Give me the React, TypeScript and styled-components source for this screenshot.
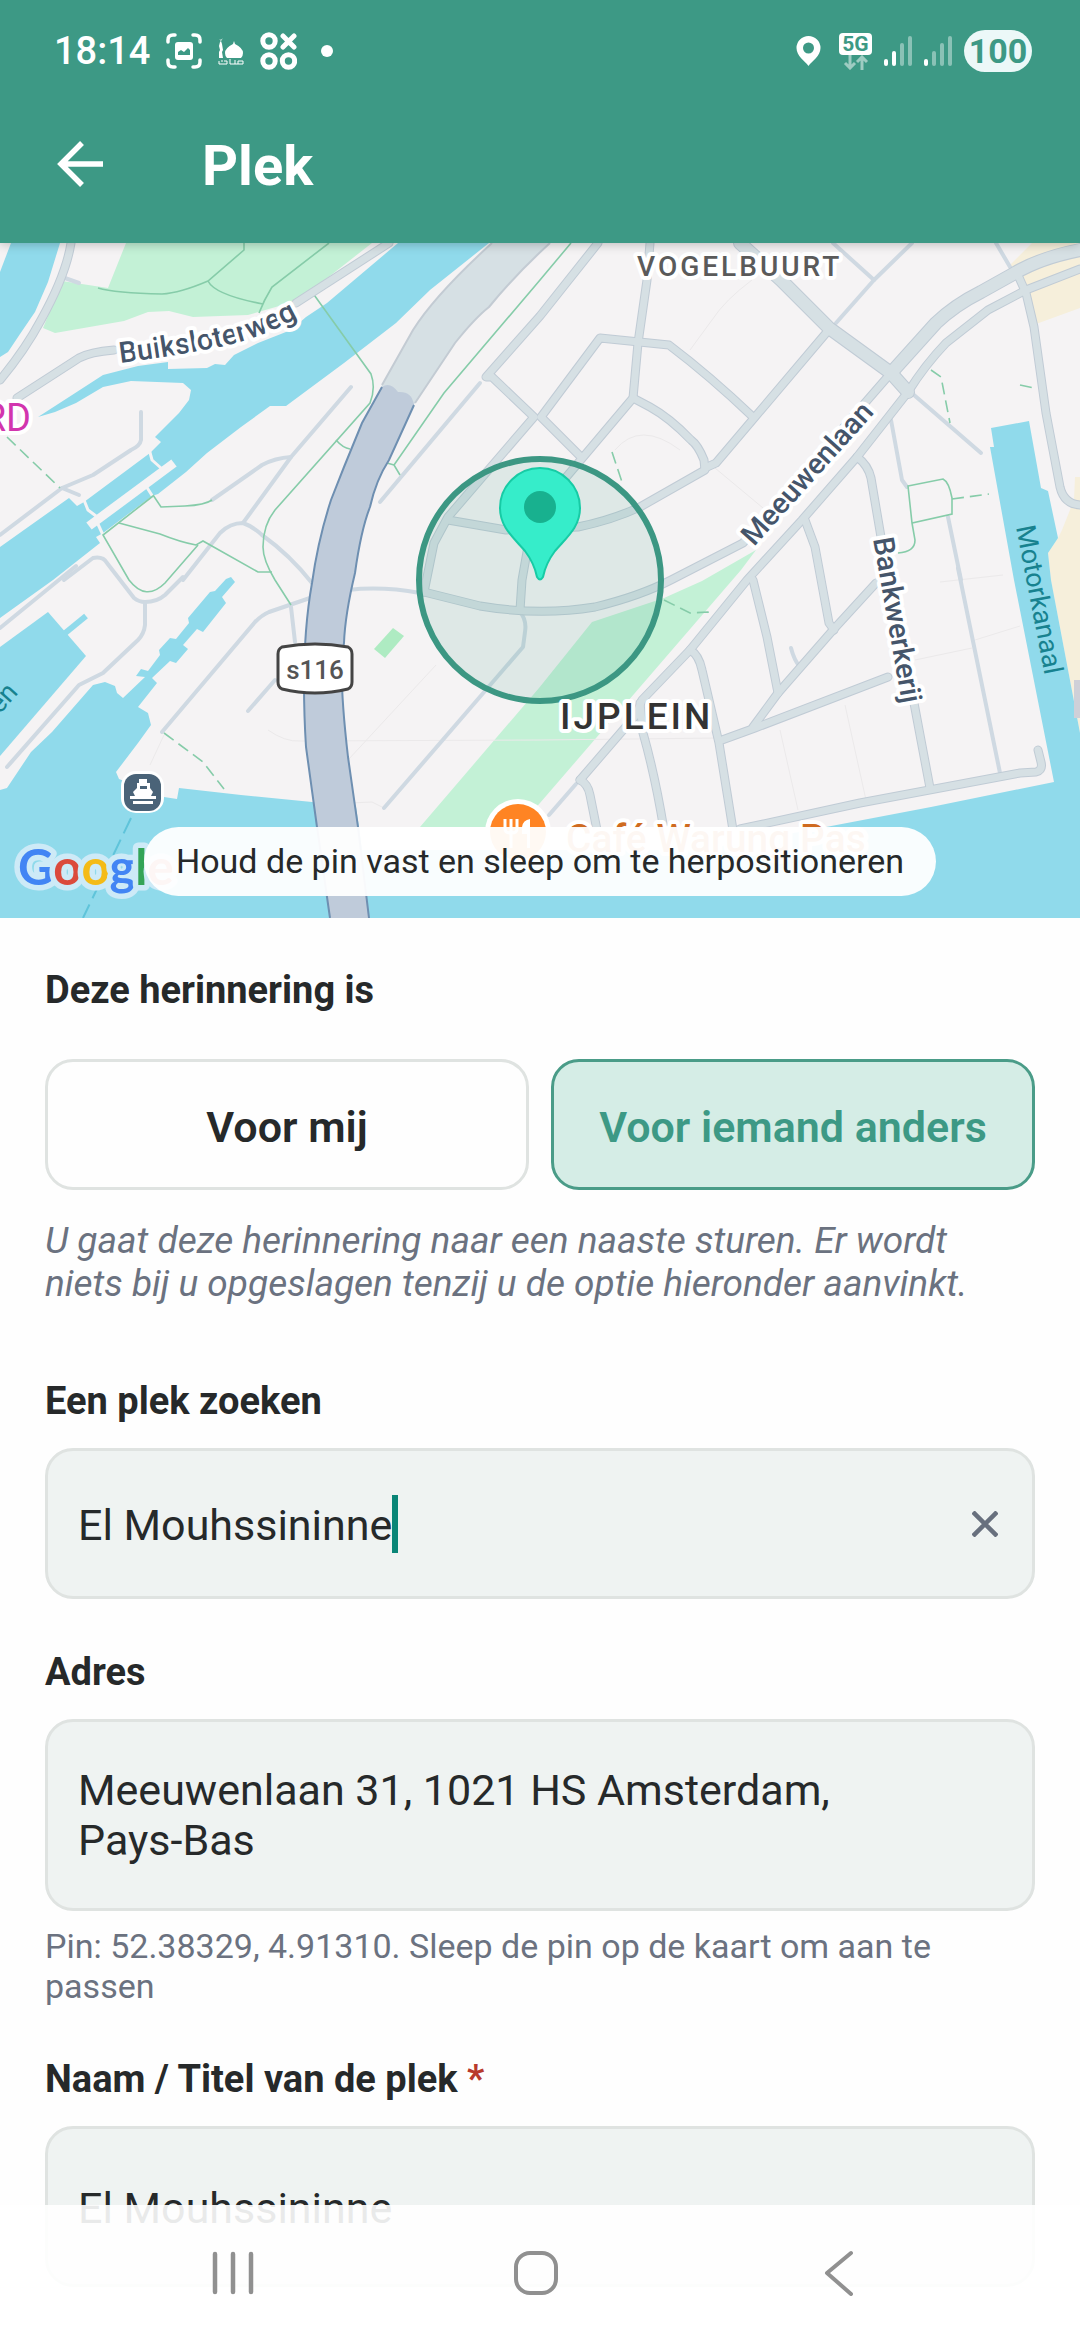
import { useState } from "react";
import styled, { createGlobalStyle } from "styled-components";

const water = [
  "11,243 60,243 48,282 35,312 20,334 8,352 0,357 0,272",
  "398,243 327,303 306,317 291,330 258,343 234,355 225,365 215,364 207,368 168,369 168,362 138,366 103,375 69,397 38,417 55,412 76,403 103,387 131,381 183,383 191,390 189,400 179,413 155,437 161,442 150,453 84,502 77,506 69,498 0,547 0,618 53,580 100,543 96,537 103,533 152,496 158,494 186,472 207,453 241,427 270,406 286,406 344,363 396,323 430,290 489,243",
  "48,612 86,656 0,756 0,647",
  "0,790 7,788 31,752 52,732 93,685 105,682 115,686 117,693 123,698 145,677 136,676 141,669 148,671 160,655 159,650 170,638 176,639 189,623 188,618 210,592 215,591 226,579 231,577 235,582 222,597 226,603 203,632 197,629 183,645 188,649 176,663 170,661 152,678 157,683 138,707 148,713 151,725 138,743 116,772 119,779 164,797 177,799 179,788 241,795 312,802 356,807 359,827 362,850 700,850 826,827 931,807 1054,782 1014,580 990,447 994,447 991,428 1029,421 1041,488 1048,491 1058,538 1048,553 1051,580 1080,733 1080,918 0,918",
];

const parks = [
  "126,243 108,288 62,281 43,328 55,333 124,321 148,312 169,311 193,317 248,315 300,300 312,290 372,243",
  "756,550 741,570 540,803 518,827 420,827 539,688 592,622 664,598 702,581",
];

const sand = [
  "1008,267 1032,243 1080,243 1080,308 1036,324 1029,297",
  "1080,477 1075,477 1074,500 1070,510 1062,530 1058,538 1048,553 1051,580 1080,733",
];

const wideRoads = [
  "M740 243L781 280L829 328L891 373L908 392",
  "M1080 250Q1040 258 1015 273L981 292Q955 305 936 323L891 373",
];

const roads = [
  "M891 373L743 543L671 580Q640 596 595 607Q540 616 480 606L424 592",
  "M1080 269L1026 290L988 310L946 343Q925 365 908 392L857 457L802 520L747 580L690 650L642 700L636 715L580 780",
  "M1017 273L1026 293L1034 327L1046 413L1060 487Q1064 504 1080 505",
  "M650 243L647 280L638 343L633 398L568 475L530 520",
  "M598 243L540 316L486 377L492 377L534 417L448 517L434 543L424 592",
  "M581 457L541 417L600 338L669 345Q710 376 753 417",
  "M448 520L506 530L578 527Q612 520 640 507L705 470L704 460Q698 445 691 440Q670 418 650 407L633 398",
  "M827 332L755 417L716 463L705 468",
  "M530 535L522 580L520 610",
  "M805 520L815 547L829 623L834 630",
  "M753 580L767 637L778 693",
  "M876 583L833 630L778 693L753 727",
  "M722 740L755 728L888 677",
  "M690 650Q699 655 702 670L719 743L733 830",
  "M640 703L643 733Q655 775 664 830",
  "M580 780Q588 784 590 795L597 830",
  "M740 829L860 803L1020 773L1036 772Q1043 770 1041 762L1038 750",
  "M857 457Q868 465 871 478L881 537L914 703L930 788",
  "M71 243Q66 275 41 320Q25 350 0 380",
  "M17 398L79 358Q90 352 114 350",
  "M296 303L389 243",
];

const lanes = [
  "M62 277L79 283",
  "M141 412V440Q140 446 131 450L93 475L62 488L0 535",
  "M62 488L79 495",
  "M351 387L291 457L243 523",
  "M291 457Q275 458 262 465L212 500",
  "M183 580L220 533Q230 523 243 523Q252 526 262 535Q290 555 312 583",
  "M64 580L93 558Q103 556 107 563L134 598Q139 602 145 602Q157 602 165 595L183 577",
  "M145 602V625Q144 634 138 640L103 673L79 685L7 767",
  "M76 566L0 628",
  "M310 598L269 612Q262 615 255 622L162 732",
  "M291 607L295 642",
  "M275 680L248 711",
  "M348 590Q382 586 420 593",
  "M480 383L380 502",
  "M520 612Q527 620 525 632L523 647L384 808",
  "M958 568L1000 773",
  "M948 517L961 580",
  "M914 395L981 453",
  "M891 420L902 480L907 487",
  "M833 243L874 280L836 323",
  "M912 243L874 280",
  "M996 243L1013 272",
  "M791 648Q794 660 800 667",
  "M576 784L549 815",
];

const footpaths = [
  "M98 288Q115 293 162 294Q180 293 208 281L244 250V243",
  "M208 281Q215 295 263 304",
  "M329 243L272 287Q264 300 259 313",
  "M312 292L371 374Q376 388 370 403L275 510Q263 525 263 547Q263 560 275 580L291 605",
  "M336 440Q343 448 350 449",
  "M571 243L540 280L444 393L394 465L400 475M387 463L394 465",
  "M153 495L161 507L185 506Q205 505 212 500",
  "M119 523L160 534Q180 542 196 545L203 541L258 572H272",
  "M153 496L103 535L129 580Q146 602 165 583L198 545",
  "M908 486L943 479Q949 482 952 498V514L912 523ZM912 523L915 540Q915 552 898 553",
];

const dashedPaths = [
  "M7 437L60 488",
  "M164 733L203 762L224 789",
  "M952 499L989 494",
  "M931 370L941 377L950 423",
  "M612 452L622 482",
  "M1020 385L1034 388",
  "M664 600L690 613L708 612L713 618",
];

const faintPaths = [
  "M268 730Q285 742 300 741L540 740L720 738",
  "M752 280Q725 300 712 320L690 350",
  "M615 450Q640 420 680 450",
  "M715 468L763 508",
  "M436 665L348 760",
  "M780 730L798 810M845 705L866 800",
  "M915 660L972 648M940 582L1003 575M975 640L1020 626",
  "M164 735L150 765M350 803L372 802L384 808",
];

const MapDrawing = () => (
  <MapSvg
    viewBox="0 243 1080 675"
    preserveAspectRatio="xMidYMid slice"
    role="img"
    aria-label="Kaart"
  >
    <rect y="243" width="1080" height="675" fill="#f5f3f4" />
    {sand.map((points) => (
      <polygon key={points} points={points} fill="#f6efdb" />
    ))}
    {parks.map((points) => (
      <polygon key={points} points={points} fill="#c3f1d6" />
    ))}
    <polygon points="393,628 404,636 385,658 374,649" fill="#aeebc2" />
    {water.map((points) => (
      <polygon key={points} points={points} fill="#90daeb" />
    ))}
    <path d="M64 634L86 616" stroke="#90daeb" strokeWidth="6" />
    <rect x="1074" y="680" width="6" height="38" fill="#cfd0d8" />

    {/* jetty and lock gates */}
    <g stroke="#f5f3f4" fill="none">
      <path d="M174 463L89 526" strokeWidth="9" />
      <path
        d="M148 445L152 460L161 468M84 500L88 510L96 516M146 486L153 497M97 522L103 535"
        strokeWidth="3"
      />
    </g>

    <g fill="none" stroke="#ebe9ea" strokeWidth="1">
      {faintPaths.map((d) => (
        <path key={d} d={d} />
      ))}
    </g>
    <g fill="none" stroke="#cfd9e2" strokeWidth="4" strokeLinecap="round" strokeLinejoin="round">
      {lanes.map((d) => (
        <path key={d} d={d} />
      ))}
    </g>
    <g fill="none" stroke="#86cca9" strokeWidth="1.6">
      {footpaths.map((d) => (
        <path key={d} d={d} />
      ))}
      <g strokeDasharray="12 6">
        {dashedPaths.map((d) => (
          <path key={d} d={d} />
        ))}
      </g>
    </g>
    <g fill="none" stroke="#c0cbd5" strokeLinecap="round" strokeLinejoin="round">
      {roads.map((d) => (
        <path key={d} d={d} strokeWidth="9" />
      ))}
      {wideRoads.map((d) => (
        <path key={d} d={d} strokeWidth="14" />
      ))}
    </g>
    <g fill="none" stroke="#d6e0e4" strokeLinecap="round" strokeLinejoin="round">
      {roads.map((d) => (
        <path key={d} d={d} strokeWidth="7" />
      ))}
      {wideRoads.map((d) => (
        <path key={d} d={d} strokeWidth="12" />
      ))}
    </g>

    {/* s116: open stretch, then the tunnel */}
    <path
      d="M492 243Q435 295 413 330L382 385L376 400L408 415L415 403L455 343Q475 318 489 307Q515 275 550 243Z"
      fill="#d6e0e4"
    />
    <path
      d="M492 243Q435 295 413 330L382 385M415 403L455 343Q475 318 489 307Q515 275 550 243"
      fill="none"
      stroke="#c3cbd3"
      strokeWidth="2"
    />
    <path
      d="M382 387L362 423L344 467L331 500Q318 540 312 583Q300 650 306 747L317 827L330 918H369L358 827L348 757Q338 670 344 643Q345 615 355 573Q361 530 370 507Q376 480 389 460L414 405Q412 391 398 392Q390 381 382 387Z"
      fill="#bfcbda"
    />
    <path
      d="M382 387L362 423L344 467L331 500Q318 540 312 583Q300 650 306 747L317 827L330 918M369 918L358 827L348 757Q338 670 344 643Q345 615 355 573Q361 530 370 507Q376 480 389 460L414 405"
      fill="none"
      stroke="#6e8fb1"
      strokeWidth="2"
    />
    <path d="M131 818L83 918" stroke="#5fc4da" strokeWidth="2" strokeDasharray="17 7" />

    <path id="buiksloterweg" d="M120 363Q205 352 243 341T320 304" fill="none" />
    <RoadText>
      <textPath href="#buiksloterweg">Buiksloterweg</textPath>
    </RoadText>
    <RoadText transform="translate(754 547) rotate(-48)">Meeuwenlaan</RoadText>
    <RoadText transform="translate(873 539) rotate(80)">Bankwerkerij</RoadText>
    <WaterText transform="translate(1016 527) rotate(79)">Motorkanaal</WaterText>
    <WaterText transform="translate(19 693) rotate(-48)" textAnchor="end">
      en
    </WaterText>
    <AreaText x="637" y="276">
      VOGELBUURT
    </AreaText>
    <StationText x="31" y="431" textAnchor="end">
      RD
    </StationText>

    <circle cx="540" cy="580" r="121" fill="#3c9a85" fillOpacity="0.12" stroke="#3c9783" strokeWidth="6" />
    <AreaText x="560" y="729" $large>
      IJPLEIN
    </AreaText>

    <path
      d="M282 647Q315 641 348 647Q352 649 352 654V682Q352 687 348 689Q315 697 282 689Q278 687 278 682V654Q278 649 282 647Z"
      fill="#fff"
      stroke="#444"
      strokeWidth="3"
    />
    <ShieldText x="315" y="679" textAnchor="middle">
      s116
    </ShieldText>

    {/* ferry terminal */}
    <rect x="121" y="771" width="43" height="42" rx="15" fill="#fff" />
    <rect x="124" y="774" width="37" height="37" rx="12" fill="#4a6378" />
    <path
      d="M137 783H139V779H147V783H150V788L153 792L151 796H156V799H130V796H135L133 792L137 788ZM133 801H153V804H133Z"
      fill="#fff"
    />
    <path d="M140 786H147V789H140Z" fill="#4a6378" />

    {/* restaurant */}
    <circle cx="518" cy="832" r="33" fill="#fff" />
    <circle cx="518" cy="832" r="28" fill="#ff8423" />
    <path
      d="M505 819V829Q505 833 511 833Q517 833 517 829V819M511 819V848"
      fill="none"
      stroke="#fff"
      strokeWidth="3"
    />
    <path d="M530 819V848H527V834H522V827Q523 820 530 819Z" fill="#fff" />
    <PlaceText x="566" y="852">
      Café Warung Pas
    </PlaceText>

    <GoogleText x="18" y="885">
      <tspan fill="#4285f4">G</tspan>
      <tspan fill="#db4a3c">o</tspan>
      <tspan fill="#f4bb17">o</tspan>
      <tspan fill="#4285f4">g</tspan>
      <tspan fill="#34a457">l</tspan>
      <tspan fill="#db4a3c">e</tspan>
    </GoogleText>

    <path
      d="M537 577C535 567 531 559 525 551C513 537 500 527 500 508A40 40 0 0 1 580 508C580 527 567 537 555 551C549 559 545 567 543 577Q540 582 537 577Z"
      fill="#36edca"
      stroke="#17cba5"
      strokeWidth="2"
    />
    <circle cx="540" cy="507" r="16" fill="#18b18f" />
  </MapSvg>
);

const SignalBars = ({ level }: { level: number }) => (
  <svg width="28" height="30" viewBox="0 0 28 30" aria-hidden="true">
    {[7, 15, 23, 30].map((height, i) => (
      <rect
        key={height}
        x={i * 8}
        y={30 - height}
        width="4"
        height={height}
        rx="2"
        fill="#fff"
        fillOpacity={i < level ? 1 : 0.4}
      />
    ))}
  </svg>
);

const StatusBar = () => (
  <StatusWrapper>
    <StatusGroup $gap={16}>
      <Clock>18:14</Clock>
      <svg width="36" height="36" viewBox="0 0 36 36" fill="none" aria-hidden="true">
        <path
          d="M2 9V7Q2 2 7 2H9M27 2H29Q34 2 34 7V9M34 27V29Q34 34 29 34H27M9 34H7Q2 34 2 29V27"
          stroke="#fff"
          strokeWidth="3.5"
          strokeLinecap="round"
        />
        <rect x="9" y="9" width="18" height="18" rx="3" fill="#fff" />
        <path d="M12 22V19L15 17L18 19L22 15L24 17V22Z" fill="#3d9985" />
      </svg>
      <svg width="26" height="28" viewBox="0 0 26 28" fill="#fff" aria-hidden="true">
        <path d="M16 4L17 7Q25 11 25 16Q25 19 23 21H9Q7 19 7 16Q7 11 15 7Z" />
        <path d="M2 5L3 4L4 7L5 13L4 15L5 21H1L1 15L2 13L1 9ZM1 2Q3 4 5 1L3 4Z" />
        <path
          d="M1 27H9V24H6M1 27V24M3 24H5M12 22V27M12 27H17V23M17 27H25V24H20V27"
          fill="none"
          stroke="#fff"
          strokeWidth="1"
        />
      </svg>
      <svg width="37" height="38" viewBox="0 0 37 38" fill="none" stroke="#fff" strokeWidth="5" aria-hidden="true">
        <circle cx="9" cy="9" r="6.2" />
        <circle cx="9" cy="29" r="6.2" />
        <circle cx="28.5" cy="29" r="6.2" />
        <path d="M23 4L34 15M34 4L23 15" strokeLinecap="round" />
      </svg>
      <Dot />
    </StatusGroup>
    <StatusGroup $gap={12}>
      <LocationIcon width="25" height="32" viewBox="0 0 25 32" aria-hidden="true">
        <path
          fillRule="evenodd"
          d="M12.5 1A12 12 0 0 1 24.5 13C24.5 21 16 26 12.5 31C9 26 .5 21 .5 13A12 12 0 0 1 12.5 1ZM12.5 7.5A5.5 5.5 0 1 0 12.5 18.5A5.5 5.5 0 1 0 12.5 7.5Z"
          fill="#fff"
        />
      </LocationIcon>
      <Network>
        <NetworkTag>5G</NetworkTag>
        <svg width="26" height="15" viewBox="0 0 26 15" fill="none" aria-hidden="true">
          <path
            d="M7 0V13M2 8L7 13L12 8M19 15V2M14 7L19 2L24 7"
            stroke="#fff"
            strokeOpacity="0.5"
            strokeWidth="3"
          />
        </svg>
      </Network>
      <SignalBars level={2} />
      <SignalBars level={1} />
      <Battery>100</Battery>
    </StatusGroup>
  </StatusWrapper>
);

const App = () => {
  const [forOther, setForOther] = useState(true);
  const [search, setSearch] = useState("El Mouhssininne");
  const [address, setAddress] = useState("Meeuwenlaan 31, 1021 HS Amsterdam, Pays-Bas");
  const [name, setName] = useState("El Mouhssininne");

  return (
    <Screen>
      <GlobalStyle />
      <Header>
        <StatusBar />
        <AppBar>
          <BackButton type="button" aria-label="Terug">
            <svg width="48" height="48" viewBox="0 0 48 48" fill="none" stroke="#fff" strokeWidth="5.5">
              <path d="M47 24H5M26 3L5 24L26 45" />
            </svg>
          </BackButton>
          <Title>Plek</Title>
        </AppBar>
      </Header>

      <MapSection>
        <MapDrawing />
        <MapHint>Houd de pin vast en sleep om te herpositioneren</MapHint>
      </MapSection>

      <Form>
        <Legend id="audience">Deze herinnering is</Legend>
        <Choices role="group" aria-labelledby="audience">
          <Choice type="button" $active={!forOther} aria-pressed={!forOther} onClick={() => setForOther(false)}>
            Voor mij
          </Choice>
          <Choice type="button" $active={forOther} aria-pressed={forOther} onClick={() => setForOther(true)}>
            Voor iemand anders
          </Choice>
        </Choices>
        <Note>
          U gaat deze herinnering naar een naaste sturen. Er wordt niets bij u opgeslagen tenzij u de
          optie hieronder aanvinkt.
        </Note>

        <Field>
          <Label htmlFor="search">Een plek zoeken</Label>
          <Box $height={151}>
            <SearchInput id="search" value={search} onChange={(e) => setSearch(e.target.value)} />
            <Caret />
            <ClearButton type="button" aria-label="Wissen" onClick={() => setSearch("")}>
              <svg width="26" height="26" viewBox="0 0 26 26" fill="none" stroke="#68707e" strokeWidth="4.5">
                <path d="M1 1L25 25M25 1L1 25" />
              </svg>
            </ClearButton>
          </Box>
        </Field>

        <Field>
          <Label htmlFor="address">Adres</Label>
          <Box $height={192}>
            <AddressInput id="address" rows={2} value={address} onChange={(e) => setAddress(e.target.value)} />
          </Box>
          <Help>Pin: 52.38329, 4.91310. Sleep de pin op de kaart om aan te passen</Help>
        </Field>

        <Field>
          <Label htmlFor="name">
            Naam / Titel van de plek <Required>*</Required>
          </Label>
          <Box $height={161}>
            <TextInput id="name" value={name} onChange={(e) => setName(e.target.value)} />
          </Box>
        </Field>
      </Form>

      <NavBar>
        <NavButton type="button" aria-label="Recente apps">
          <svg width="42" height="46" viewBox="0 0 42 46" stroke="#909090" strokeWidth="4.5" strokeLinecap="round">
            <path d="M3 4V42M21 4V42M39 4V42" />
          </svg>
        </NavButton>
        <NavButton type="button" aria-label="Startscherm">
          <svg width="46" height="46" viewBox="0 0 46 46" fill="none" stroke="#909090" strokeWidth="4">
            <rect x="3" y="3" width="40" height="40" rx="14" />
          </svg>
        </NavButton>
        <NavButton type="button" aria-label="Vorige">
          <svg width="30" height="46" viewBox="0 0 30 46" fill="none" stroke="#909090" strokeWidth="4">
            <path d="M27 3L3 23L27 44" strokeLinecap="round" strokeLinejoin="round" />
          </svg>
        </NavButton>
      </NavBar>
    </Screen>
  );
};

const GlobalStyle = createGlobalStyle`
  * {
    box-sizing: border-box;
  }
  body {
    margin: 0;
    background: #fefefe;
    color: #26292a;
    font-family: Roboto, "Liberation Sans", sans-serif;
  }
  button, input, textarea {
    margin: 0;
    padding: 0;
    border: none;
    background: none;
    color: inherit;
    font: inherit;
  }
`;

const Screen = styled.div`
  display: flex;
  flex-direction: column;
  min-height: 100vh;
`;

const Header = styled.header`
  position: relative;
  z-index: 1;
  background: #3d9985;
  color: #fff;
  box-shadow: 0 1px 10px rgba(0, 0, 0, 0.25);
`;
const StatusWrapper = styled.div`
  display: flex;
  justify-content: space-between;
  height: 88px;
  padding: 14px 48px 0 54px;
`;
const StatusGroup = styled.div<{ $gap: number }>`
  display: flex;
  align-items: center;
  gap: ${({ $gap }) => $gap}px;
`;
const Clock = styled.span`
  font-size: 38px;
  font-weight: 500;
`;
const Dot = styled.i`
  width: 12px;
  height: 12px;
  margin-left: 8px;
  border-radius: 50%;
  background: #fff;
`;
const LocationIcon = styled.svg`
  margin-right: 6px;
`;
const Network = styled.span`
  display: flex;
  flex-direction: column;
  align-items: center;
`;
const NetworkTag = styled.span`
  width: 33px;
  border-radius: 4px;
  background: #fff;
  color: #3d9985;
  font-size: 21px;
  font-weight: 700;
  line-height: 22px;
  text-align: center;
`;
const Battery = styled.span`
  width: 68px;
  border-radius: 21px;
  background: #ecf8f8;
  color: #3d9985;
  font-size: 34px;
  font-weight: 700;
  line-height: 42px;
  text-align: center;
`;
const AppBar = styled.div`
  display: flex;
  align-items: center;
  gap: 98px;
  height: 155px;
  padding: 0 56px;
`;
const BackButton = styled.button`
  display: flex;
  padding-bottom: 4px;
`;
const Title = styled.h1`
  margin: 0;
  font-size: 56px;
  font-weight: 700;
`;

const MapSection = styled.section`
  position: relative;
  aspect-ratio: 1080 / 675;
`;
const MapSvg = styled.svg`
  display: block;
  width: 100%;
  height: 100%;
`;
const MapText = styled.text`
  font-weight: 500;
  paint-order: stroke;
  stroke: #fff;
  stroke-width: 8px;
  stroke-linejoin: round;
`;
const RoadText = styled(MapText)`
  font-size: 29px;
  fill: #45556a;
`;
const WaterText = styled(MapText)`
  font-size: 27px;
  font-weight: 400;
  fill: #17828f;
  stroke: none;
`;
const AreaText = styled(MapText)<{ $large?: boolean }>`
  font-size: ${({ $large }) => ($large ? 37 : 28)}px;
  letter-spacing: 3px;
  fill: ${({ $large }) => ($large ? "#333" : "#5a5a5a")};
`;
const StationText = styled(MapText)`
  font-size: 38px;
  font-weight: 400;
  fill: #d235ae;
`;
const ShieldText = styled(MapText)`
  font-size: 26px;
  fill: #555;
`;
const PlaceText = styled(MapText)`
  font-size: 39px;
  fill: #cf6b20;
`;
const GoogleText = styled(MapText)`
  font-family: Lato, sans-serif;
  font-size: 49px;
  font-weight: 700;
  stroke: #cdeaf7;
  stroke-width: 11px;
`;
const MapHint = styled.p`
  position: absolute;
  bottom: 22px;
  left: 50%;
  margin: 0;
  padding: 0 32px;
  border-radius: 35px;
  background: rgba(255, 255, 255, 0.95);
  font-size: 34px;
  line-height: 69px;
  white-space: nowrap;
  transform: translateX(-50%);
`;

const Form = styled.main`
  display: flex;
  flex-direction: column;
  padding: 51px 45px 53px;
`;
const Legend = styled.div`
  font-size: 38px;
  font-weight: 700;
  line-height: 42px;
`;
const Choices = styled.div`
  display: grid;
  grid-template-columns: 1fr 1fr;
  gap: 22px;
  margin-top: 48px;
`;
const Choice = styled.button<{ $active: boolean }>`
  height: 131px;
  padding-top: 4px;
  border: 3px solid ${({ $active }) => ($active ? "#4a9c88" : "#dfe3e1")};
  border-radius: 28px;
  background: ${({ $active }) => ($active ? "#d5ede6" : "#fefefe")};
  color: ${({ $active }) => ($active ? "#3d9985" : "inherit")};
  font-size: 43px;
  font-weight: 600;
`;
const Note = styled.p`
  margin: 29px 0 23px;
  padding-right: 32px;
  color: #6b7280;
  font-size: 37px;
  font-style: italic;
  line-height: 43px;
`;
const Field = styled.div`
  display: flex;
  flex-direction: column;
  padding-top: 52px;
`;
const Label = styled.label`
  font-size: 38px;
  font-weight: 700;
  line-height: 42px;
`;
const Required = styled.span`
  color: #b83a2c;
`;
const Box = styled.div<{ $height: number }>`
  display: flex;
  align-items: center;
  min-height: ${({ $height }) => $height}px;
  margin-top: 26px;
  padding: 0 30px;
  border: 3px solid #dfe3e1;
  border-radius: 28px;
  background: #eff3f2;
  font-size: 43px;
  line-height: 50px;
`;
const TextInput = styled.input`
  flex: 1;
  min-width: 0;
  padding-top: 3px;
  outline: none;
`;
const SearchInput = styled.input`
  padding-top: 3px;
  field-sizing: content;
  caret-color: transparent;
  outline: none;
`;
const Caret = styled.i`
  width: 6px;
  height: 58px;
  background: #0a8577;
`;
const ClearButton = styled.button`
  display: flex;
  margin-left: auto;
  padding: 4px;
`;
const AddressInput = styled.textarea`
  flex: 1;
  padding-right: 80px;
  overflow: hidden;
  outline: none;
  resize: none;
`;
const Help = styled.p`
  margin: 15px 0 0;
  color: #6b7280;
  font-size: 34px;
  line-height: 40px;
`;

const NavBar = styled.nav`
  position: fixed;
  right: 0;
  bottom: 0;
  left: 0;
  display: grid;
  grid-template-columns: repeat(3, 1fr);
  height: 135px;
  padding: 0 90px 0 82px;
  background: rgba(255, 255, 255, 0.9);
`;
const NavButton = styled.button`
  display: flex;
  align-items: center;
  justify-content: center;
`;

export default App;
